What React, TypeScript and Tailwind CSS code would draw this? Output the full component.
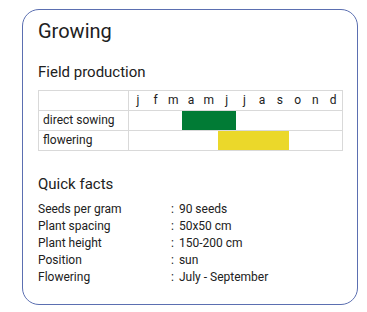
const MONTHS = ["j", "f", "m", "a", "m", "j", "j", "a", "s", "o", "n", "d"];

const FACTS = [
  ["Seeds per gram", "90 seeds"],
  ["Plant spacing", "50x50 cm"],
  ["Plant height", "150-200 cm"],
  ["Position", "sun"],
  ["Flowering", "July - September"],
];

export default function App() {
  return (
    <div className="min-h-screen bg-white pt-[9px] pl-[22px] font-['Roboto',sans-serif] text-[#212121]">
      <div className="w-[336px] h-[296px] border border-[#5b6fb1] rounded-[17px] pl-[15px] pt-[5px]">
        <h2 className="text-[20px] leading-[32px]">Growing</h2>

        <h3 className="mt-[15px] text-[15px] leading-[20px]">Field production</h3>

        {/* production calendar */}
        <div className="mt-[8px] w-[305px] border-t border-x border-[#d9d9d9] text-[12px]">
          <div className="grid grid-cols-[90px_repeat(12,minmax(0,1fr))] h-[20px] border-b border-[#d9d9d9]">
            <div className="border-r border-[#d9d9d9]" />
            {MONTHS.map((m, i) => (
              <span key={i} className="text-center leading-[19px]">
                {m}
              </span>
            ))}
          </div>
          <div className="grid grid-cols-[90px_repeat(12,minmax(0,1fr))] h-[20px] border-b border-[#d9d9d9]">
            <div className="border-r border-[#d9d9d9] pl-[4px] leading-[19px]">direct sowing</div>
            <div className="col-start-5 col-span-3 bg-[#017b35]" />
          </div>
          <div className="grid grid-cols-[90px_repeat(12,minmax(0,1fr))] h-[20px] border-b border-[#d9d9d9]">
            <div className="border-r border-[#d9d9d9] pl-[4px] leading-[19px]">flowering</div>
            <div className="col-start-7 col-span-4 bg-[#ebd82a]" />
          </div>
        </div>

        <h3 className="mt-[23px] text-[15px] leading-[20px]">Quick facts</h3>

        <div className="mt-[7px] text-[12px] leading-[17px]">
          {FACTS.map(([k, v]) => (
            <div key={k} className="flex">
              <span className="w-[133px]">{k}</span>
              <span>:</span>
              <span className="ml-[5px]">{v}</span>
            </div>
          ))}
        </div>
      </div>
    </div>
  );
}
